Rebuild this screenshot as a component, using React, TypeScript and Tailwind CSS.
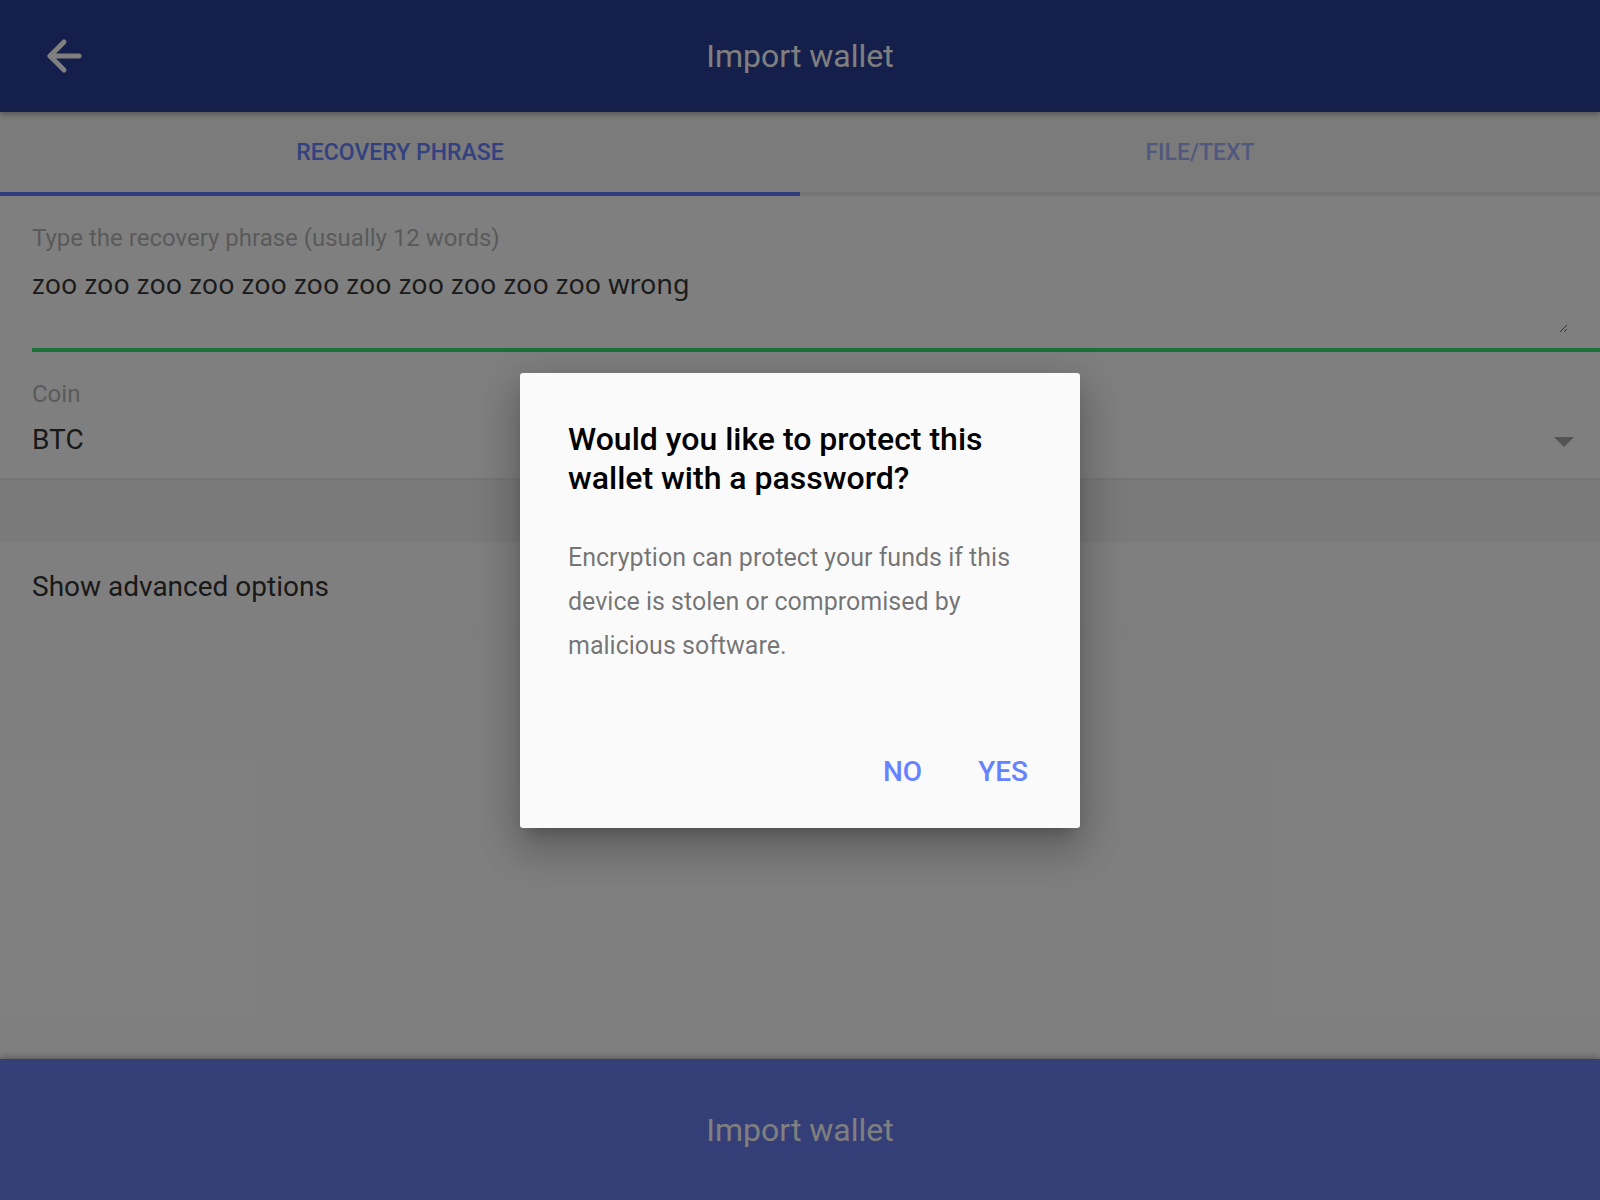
import { ChangeEvent, useState } from "react";

const PHRASE = "zoo zoo zoo zoo zoo zoo zoo zoo zoo zoo zoo wrong";

export default function App() {
  const [tab, setTab] = useState<"phrase" | "file">("phrase");
  const [phrase, setPhrase] = useState(PHRASE);

  return (
    <div className="relative flex h-[1200px] w-full flex-col overflow-hidden bg-white font-['Roboto',sans-serif]">
      {/* app bar */}
      <header className="relative z-10 flex h-[112px] shrink-0 items-center bg-[#283e96] shadow-[0_2px_6px_rgba(0,0,0,0.35)]">
        <button type="button" className="ml-[40px] flex h-[48px] w-[48px] items-center justify-center">
          <svg width="40" height="40" viewBox="0 0 40 40" fill="none" stroke="#ffffff" strokeWidth="5" strokeLinecap="round" strokeLinejoin="round">
            <path d="M35 20H6" />
            <path d="M20 6 6 20l14 14" />
          </svg>
        </button>
        <h1 className="absolute left-1/2 -translate-x-1/2 text-[32px] font-normal text-white">Import wallet</h1>
      </header>

      {/* tabs */}
      <nav className="flex h-[84px] shrink-0 bg-[#f6f6f6]">
        {[
          { id: "phrase" as const, label: "RECOVERY PHRASE" },
          { id: "file" as const, label: "FILE/TEXT" },
        ].map((t) => (
          <button
            key={t.id}
            type="button"
            onClick={() => setTab(t.id)}
            className={
              tab === t.id
                ? "flex flex-1 items-center justify-center border-b-4 border-[#5e7aff] pt-[3px] text-[23px] font-medium text-[#6682ff]"
                : "flex flex-1 items-center justify-center border-b-4 border-[#ececec] pt-[3px] text-[23px] font-medium text-[#6682ff]/60"
            }
          >
            {t.label}
          </button>
        ))}
      </nav>

      {/* form */}
      <main className="flex flex-1 flex-col">
        <div className="pl-[32px]">
          <div className="pt-[28px] text-[24px] leading-[28px] text-[#b5b5b5]">
            Type the recovery phrase (usually 12 words)
          </div>
          <textarea
            value={phrase}
            onChange={(e: ChangeEvent<HTMLTextAreaElement>) => setPhrase(e.target.value)}
            className="mt-[14px] block h-[67px] w-[calc(100%-32px)] font-['Noto_Sans',sans-serif] text-[27px] leading-[36px] text-[#363636] outline-none"
          />
          <div className="mt-[15px] h-[4px] bg-[#35e470]" />
        </div>

        <div className="flex h-[128px] shrink-0 items-start border-b-2 border-[#ececec] pl-[32px] pr-[26px]">
          <div className="flex-1 pt-[28px]">
            <div className="text-[24px] leading-[28px] text-[#b5b5b5]">Coin</div>
            <div className="mt-[16px] text-[28px] leading-[32px] text-[#333333]">BTC</div>
          </div>
          <svg width="20" height="10" viewBox="0 0 20 10" className="mt-[85px]">
            <path d="M0 0h20L10 10z" fill="#a8a8a8" />
          </svg>
        </div>

        <div className="h-[62px] shrink-0 bg-[#f4f4f4]" />

        <div className="flex h-[91px] shrink-0 items-center border-b-2 border-[#fafafa] pl-[32px] text-[28px] text-[#333333]">
          Show advanced options
        </div>
      </main>

      {/* primary action */}
      <button
        type="button"
        className="relative z-10 flex h-[141px] shrink-0 items-center justify-center bg-[#687cee] text-[32px] text-white shadow-[0_-2px_6px_rgba(0,0,0,0.3)]"
      >
        Import wallet
      </button>

      {/* dialog scrim */}
      <div className="absolute inset-0 z-20 flex items-center justify-center bg-black/50">
        <div className="flex h-[455px] w-[560px] flex-col rounded-[3px] bg-[#fafafa] px-[48px] pt-[47px] shadow-[0_11px_15px_-7px_rgba(0,0,0,0.2),0_24px_38px_3px_rgba(0,0,0,0.14),0_9px_46px_8px_rgba(0,0,0,0.12)]">
          <h2 className="text-[32px] font-medium leading-[39px] text-black">
            Would you like to protect this wallet with a password?
          </h2>
          <p className="mt-[38px] text-[25px] leading-[44px] text-black/55">
            Encryption can protect your funds if this device is stolen or compromised by malicious software.
          </p>
          <div className="mt-auto mb-[41px] mr-[4px] flex justify-end gap-[56px] text-[28px] font-medium leading-[30px] text-[#6682ff]">
            <button type="button">NO</button>
            <button type="button">YES</button>
          </div>
        </div>
      </div>
    </div>
  );
}
